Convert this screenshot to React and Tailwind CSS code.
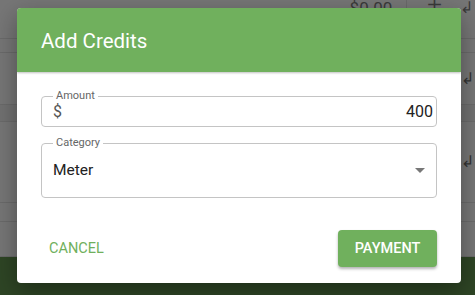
import React from "react";

function BgRow({ className = "", children }) {
  return <div className={`flex items-center border-b border-[#6a6a6a] ${className}`}>{children}</div>;
}

export default function App() {
  return (
    <div className="relative w-[475px] h-[295px] overflow-hidden bg-[#767676] font-['Roboto','Liberation_Sans',sans-serif]">
      {/* page behind the overlay */}
      <div className="flex flex-col h-full">
        <BgRow className="h-[39px] justify-end pr-[2px] text-[#3a3a3a]">
          <span className="text-[17px] -mt-[20px]">$0.00</span>
          <span className="w-px h-[30px] bg-[#6a6a6a] ml-[14px] -mt-[22px]" />
          <span className="text-[26px] font-light ml-[20px] mr-[18px] -mt-[30px]">+</span>
          <span className="text-[16px] -mt-[22px]">↲</span>
        </BgRow>
        <BgRow className="h-[14px]" />
        <BgRow className="h-[52px] justify-end pr-[1px]">
          <span className="text-[16px] text-[#333]">↲</span>
        </BgRow>
        <BgRow className="h-[17px] bg-[#717171]" />
        <BgRow className="h-[81px] justify-end pr-[1px]">
          <span className="text-[16px] text-[#333]">↲</span>
        </BgRow>
        <BgRow className="h-[19px]" />
        <BgRow className="h-[35px]" />
        <div className="flex-1 bg-[#2e4525]" />
      </div>

      {/* dialog */}
      <div className="absolute left-[17px] top-[8px] w-[444px] h-[275px] bg-white rounded-[4px] overflow-hidden shadow-[0_8px_24px_rgba(0,0,0,0.35)] flex flex-col">
        <div className="h-[64px] shrink-0 bg-[#70b05d] flex items-center px-6 shadow-[0_1px_2px_rgba(0,0,0,0.25)] relative z-10">
          <h2 className="text-white text-[20.5px] font-normal mt-[2px]">Add Credits</h2>
        </div>

        <div className="px-6 pt-[18px] flex flex-col gap-[10px]">
          <fieldset className="border border-[#c4c4c4] rounded-[4px] px-[11px] min-w-0">
            <legend className="px-[3px] text-[11px] leading-[12px] text-[#666]">Amount</legend>
            <div className="flex items-center h-[24px] pb-[4px] text-[16px] text-[#222]">
              <span className="text-[#555]">$</span>
              <span className="ml-auto mr-[-8px]">400</span>
            </div>
          </fieldset>

          <fieldset className="border border-[#c4c4c4] rounded-[4px] px-[11px] min-w-0">
            <legend className="px-[3px] text-[11px] leading-[12px] text-[#666]">Category</legend>
            <div className="flex items-center h-[48px] pb-[5px] text-[15.5px] text-[#222]">
              <span>Meter</span>
              <svg className="ml-auto" width="10" height="5" viewBox="0 0 10 5">
                <path d="M0 0 L10 0 L5 5 Z" fill="#777" />
              </svg>
            </div>
          </fieldset>
        </div>

        <div className="mt-auto flex items-center justify-between pl-[24px] pr-[24px] pb-[16px]">
          <button className="px-2 h-[37px] text-[14.5px] font-normal text-[#70b05d]">CANCEL</button>
          <button className="w-[99px] h-[37px] rounded-[4px] bg-[#70b05d] text-white text-[14.5px] font-medium shadow-[0_2px_3px_rgba(0,0,0,0.3)]">
            PAYMENT
          </button>
        </div>
      </div>
    </div>
  );
}
